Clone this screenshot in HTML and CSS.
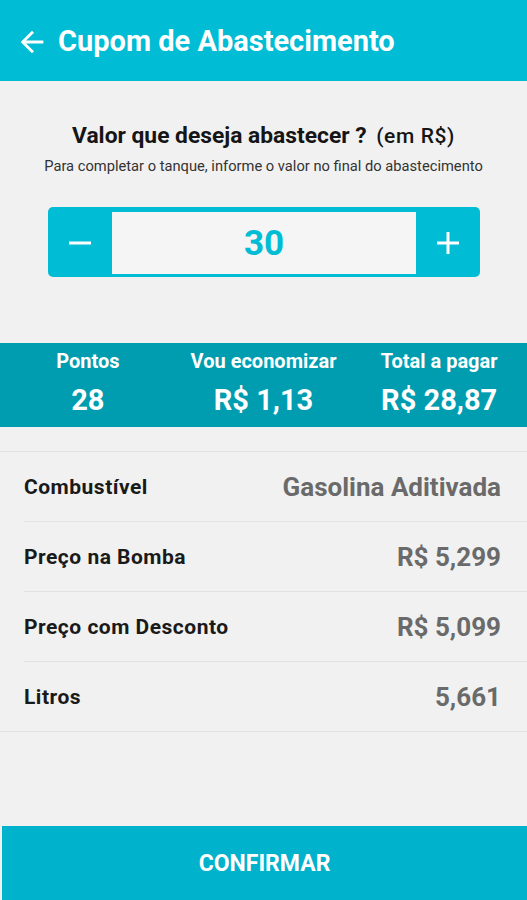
FILE: index.html
```html
<!DOCTYPE html>
<html lang="pt-BR">
<head>
    <meta charset="UTF-8">
    <meta name="viewport" content="width=device-width, initial-scale=1.0">
    <title>Cupom de Abastecimento</title>
    <link rel="stylesheet" href="styles.css">
</head>
<body>
    <div class="topbar">
        <svg class="back" width="34" height="34" viewBox="0 0 24 24">
            <path d="M20 11H7.830l5.59-5.59L12 4l-8 8 8 8 1.41-1.41L7.83 13H20v-2z" fill="#fff"/>
        </svg>
        <h1 class="title">Cupom de Abastecimento</h1>
    </div>

    <div class="ask">
        <div class="question">Valor que deseja abastecer ? <span class="unit">(em R$)</span></div>
        <div class="hint">Para completar o tanque, informe o valor no final do abastecimento</div>
    </div>

    <div class="stepper">
        <button class="step" id="minus">
            <svg width="24" height="24" viewBox="0 0 24 24"><rect x="1" y="10.5" width="22" height="3" fill="#fff"/></svg>
        </button>
        <div class="amount" id="amount">30</div>
        <button class="step" id="plus">
            <svg width="24" height="24" viewBox="0 0 24 24"><rect x="1" y="10.5" width="22" height="3" fill="#fff"/><rect x="10.5" y="1" width="3" height="22" fill="#fff"/></svg>
        </button>
    </div>

    <div class="stats">
        <div class="stat">
            <div class="stat-label">Pontos</div>
            <div class="stat-value">28</div>
        </div>
        <div class="stat">
            <div class="stat-label">Vou economizar</div>
            <div class="stat-value">R$ 1,13</div>
        </div>
        <div class="stat">
            <div class="stat-label">Total a pagar</div>
            <div class="stat-value">R$ 28,87</div>
        </div>
    </div>

    <div class="details">
        <div class="row">
            <span class="row-label">Combustível</span>
            <span class="row-value">Gasolina Aditivada</span>
        </div>
        <div class="row">
            <span class="row-label">Preço na Bomba</span>
            <span class="row-value">R$ 5,299</span>
        </div>
        <div class="row">
            <span class="row-label">Preço com Desconto</span>
            <span class="row-value">R$ 5,099</span>
        </div>
        <div class="row">
            <span class="row-label">Litros</span>
            <span class="row-value">5,661</span>
        </div>
    </div>

    <div class="spacer"></div>
    <button class="confirm">CONFIRMAR</button>
</body>
</html>
```

FILE: styles.css
```css
body {
    display: flex;
    flex-direction: column;
    height: 900px;
    margin: 0;
    background-color: #f1f1f1;
    font-family: 'Roboto', 'Liberation Sans', sans-serif;
    color: #1a1a1a;
}
.topbar {
    height: 81px;
    flex-shrink: 0;
    background-color: #00bcd4;
    display: flex;
    align-items: center;
    padding-left: 15px;
    gap: 9px;
}
.back {
    margin-top: 3px;
}
.title {
    margin: 0;
    font-size: 29px;
    font-weight: 700;
    color: #fff;
}
.ask {
    padding-top: 41px;
    text-align: center;
}
.question {
    font-size: 22.8px;
    font-weight: 700;
    color: #151515;
    line-height: 28px;
}
.unit {
    font-size: 21px;
    font-weight: 500;
    letter-spacing: 0.6px;
    margin-left: 4px;
}
.hint {
    margin-top: 7px;
    font-size: 14.7px;
    color: #333;
    line-height: 18px;
}
.stepper {
    margin: 32px 47px 0 48px;
    height: 70px;
    box-sizing: border-box;
    padding: 5px 0 3px;
    display: flex;
    background-color: #00bcd4;
    border-radius: 5px;
}
.step {
    width: 64px;
    border: none;
    background: none;
    display: flex;
    justify-content: center;
    align-items: center;
    padding: 0;
    cursor: pointer;
}
.amount {
    flex: 1;
    background-color: #f5f5f5;
    display: flex;
    justify-content: center;
    align-items: center;
    font-size: 35px;
    font-weight: 700;
    color: #00bcd4;
}
.stats {
    margin-top: 66px;
    height: 84px;
    flex-shrink: 0;
    background-color: #009db0;
    display: flex;
    color: #fff;
}
.stat {
    flex: 1;
    text-align: center;
    padding-top: 6px;
}
.stat-label {
    font-size: 20px;
    font-weight: 700;
    line-height: 24px;
}
.stat-value {
    margin-top: 10px;
    font-size: 29px;
    font-weight: 700;
    line-height: 34px;
}
.details {
    margin-top: 24px;
    border-top: 1px solid #e2e2e2;
    border-bottom: 1px solid #e2e2e2;
}
.row {
    height: 69px;
    margin-left: 24px;
    padding-right: 26px;
    display: flex;
    justify-content: space-between;
    align-items: center;
    border-top: 1px solid #e2e2e2;
}
.row:first-child {
    border-top: none;
}
.row-label {
    font-size: 21px;
    font-weight: 700;
    letter-spacing: 0.5px;
    color: #1a1a1a;
}
.row-value {
    font-size: 26px;
    font-weight: 700;
    color: #6a6a6a;
}
.spacer {
    flex: 1;
}
.confirm {
    height: 74px;
    flex-shrink: 0;
    margin-left: 2px;
    border: none;
    background-color: #00b2cb;
    color: #fff;
    font-family: 'Roboto', 'Liberation Sans', sans-serif;
    font-size: 23px;
    font-weight: 700;
    cursor: pointer;
}
```
